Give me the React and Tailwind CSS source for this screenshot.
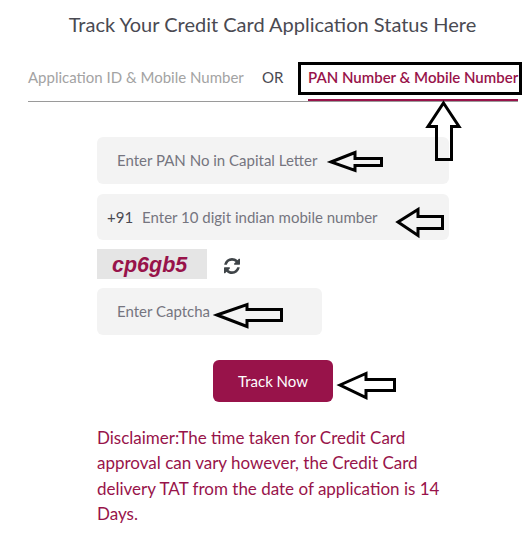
import React from "react";

const arrows = [
  "331,162 355,152.5 355,158.5 381.5,158.5 381.5,165.5 355,165.5 355,170.5",
  "398,222 418,209.5 418,216.5 442.5,216.5 442.5,228.5 418,228.5 418,235.5",
  "217,315 247,304.5 247,309.5 281.5,309.5 281.5,320.5 247,320.5 247,326.5",
  "340,385 366,373.5 366,379.5 394.5,379.5 394.5,390.5 366,390.5 366,397.5",
  "443.5,103 459,126.5 451.5,126.5 451.5,159.5 436.5,159.5 436.5,126.5 428,126.5",
];

const Field = ({ className, children }) => (
  <div className={`flex items-center bg-[#f3f3f3] rounded-md text-[15px] text-[#75757f] ${className}`}>
    {children}
  </div>
);

const RefreshIcon = () => (
  <svg className="ml-[17px] mt-[3px] w-[16px] h-[16px] text-[#3f4448]" viewBox="0 128 1536 1536" fill="currentColor">
    <path d="M1511 1056q0 5-1 7-64 268-268 434.5t-478 166.5q-146 0-282.5-55t-243.5-157l-129 129q-19 19-45 19t-45-19-19-45v-448q0-26 19-45t45-19h448q26 0 45 19t19 45-19 45l-137 137q71 66 161 102t187 36q134 0 250-65t186-179q11-17 53-117 8-23 30-23h192q13 0 22.5 9.5t9.5 22.5zm25-800v448q0 26-19 45t-45 19h-448q-26 0-45-19t-19-45 19-45l138-138q-148-137-349-137-134 0-250 65t-186 179q-11 17-53 117-8 23-30 23h-199q-13 0-22.5-9.5t-9.5-22.5v-7q65-268 270-434.5t480-166.5q146 0 284 55.5t245 156.5l130-129q19-19 45-19t45 19 19 45z" />
  </svg>
);

export default function App() {
  return (
    <div className="relative w-[530px] h-[545px] bg-white overflow-hidden font-['Lato',sans-serif]">
      <h1 className="pt-[10px] pl-[15px] h-[62px] text-center text-[20px] leading-[28px] text-[#4a4a52] font-normal">
        Track Your Credit Card Application Status Here
      </h1>

      {/* Tabs */}
      <div className="ml-[28px] w-[490px] h-[40px] flex items-start border-b border-[#9a9a9a] text-[15px]">
        <span className="pt-[4px] w-[234px] text-[#a3a3a3] whitespace-nowrap">Application ID &amp; Mobile Number</span>
        <span className="pt-[4px] w-[46px] text-[#4a4a52]">OR</span>
        <span className="pt-[4px] w-[210px] h-[39px] border-b-2 border-[#98134a] font-semibold text-[#98134a] whitespace-nowrap">
          PAN Number &amp; Mobile Number
        </span>
      </div>

      {/* Form */}
      <div className="pl-[97px] pt-[35px] flex flex-col">
        <Field className="w-[352px] h-[47px] pl-[20px]">Enter PAN No in Capital Letter</Field>
        <Field className="w-[352px] h-[46px] mt-[10px] pl-[10px]">
          <span className="text-[#4a4a52] mr-[9px]">+91</span>
          Enter 10 digit indian mobile number
        </Field>
        <div className="flex items-center mt-[9px] h-[30px]">
          <div className="w-[110px] h-[30px] bg-[#e5e5e5] pl-[15px] text-[21.5px] leading-[33px] font-bold italic font-['Liberation_Sans',sans-serif] text-[#98134a] overflow-hidden">
            cp6gb5
          </div>
          <RefreshIcon />
        </div>
        <Field className="w-[225px] h-[47px] mt-[9px] pl-[20px]">Enter Captcha</Field>
        <button
          type="button"
          className="ml-[116px] mt-[25px] w-[120px] h-[42px] rounded-md bg-[#98134a] text-white text-[15px]"
        >
          Track Now
        </button>
        <p className="mt-[23px] w-[352px] text-[17px] leading-[25.4px] text-[#98134a]">
          Disclaimer:The time taken for Credit Card approval can vary however, the Credit Card delivery TAT from the date of application is 14 Days.
        </p>
      </div>

      {/* Hand-drawn annotations on top of the page */}
      <div className="absolute left-[298px] top-[62px] w-[224px] h-[33px] border-[3px] border-black" />
      <svg className="absolute inset-0 w-[530px] h-[545px] pointer-events-none" viewBox="0 0 530 545">
        {arrows.map((points) => (
          <polygon key={points} points={points} fill="none" stroke="#000" strokeWidth="3" strokeLinejoin="miter" />
        ))}
      </svg>
    </div>
  );
}
